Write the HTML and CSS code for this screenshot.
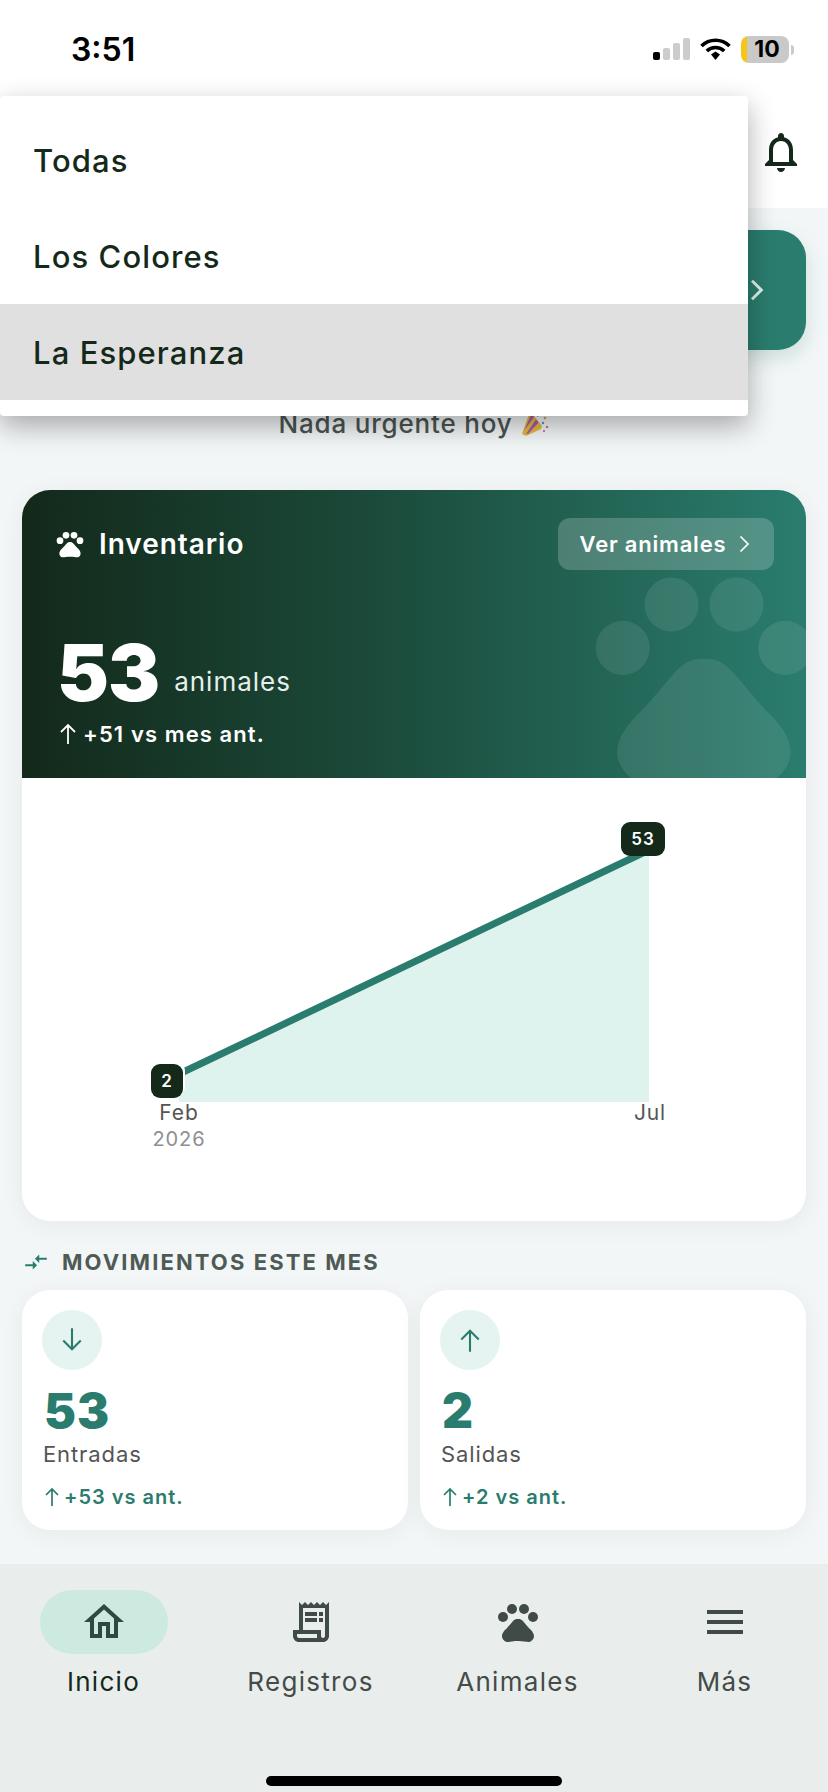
FILE: index.html
```html
<!DOCTYPE html>
<html lang="es">
<head>
    <meta charset="UTF-8">
    <meta name="viewport" content="width=device-width, initial-scale=1.0">
    <title>Inicio</title>
    <link rel="stylesheet" href="styles.css">
</head>
<body>

<div class="screen">

    <!-- Status bar + app bar -->
    <header class="top">
        <div class="status">
            <span class="time">3:51</span>
            <div class="status-icons">
                <svg class="signal" width="37" height="22" viewBox="0 0 37 22">
                    <rect x="0" y="14" width="7" height="8" rx="2" fill="#000"/>
                    <rect x="10" y="10" width="7" height="12" rx="2" fill="#ccc"/>
                    <rect x="20" y="5" width="7" height="17" rx="2" fill="#ccc"/>
                    <rect x="30" y="0" width="7" height="22" rx="2" fill="#ccc"/>
                </svg>
                <svg class="wifi" width="31" height="22" viewBox="0 0 31 22">
                    <path d="M1.5 8a20 20 0 0 1 28 0" fill="none" stroke="#000" stroke-width="3.6"/>
                    <path d="M6.8 13a12.5 12.5 0 0 1 17.4 0" fill="none" stroke="#000" stroke-width="3.6"/>
                    <path d="M11 16.5l4.5-3 4.5 3-4.5 5.5z" fill="#000"/>
                </svg>
                <div class="battery"><span>10</span></div>
                <div class="battery-cap"></div>
            </div>
        </div>
        <div class="appbar">
            <svg class="bell" width="48" height="48" viewBox="0 0 24 24"><path d="M12 22c1.1 0 2-.9 2-2h-4c0 1.1.9 2 2 2zm6-6v-5c0-3.07-1.63-5.64-4.5-6.32V4c0-.83-.67-1.5-1.5-1.5s-1.5.67-1.5 1.5v.68C7.64 5.36 6 7.92 6 11v5l-2 2v1h16v-1l-2-2zm-2 1H8v-6c0-2.48 1.51-4.5 4-4.5s4 2.02 4 4.5v6z"/></svg>
        </div>
    </header>

    <main class="content">
        <div class="banner">
            <svg width="32" height="32" viewBox="0 0 24 24" fill="none" stroke="#dff0ec" stroke-width="2.2"><path d="M9 5l7 7-7 7"/></svg>
        </div>

        <p class="nothing">Nada urgente hoy
            <svg class="party" width="28" height="30" viewBox="0 0 28 30">
                <path d="M9 3l12 15-1 3-15 7-4-2z" fill="#e8b93c"/>
                <path d="M10.5 6l2.5 3-8 11-2 3zM15 11.5l2.5 3-10 11-2.5.5z" fill="#a45cb5"/>
                <path d="M16 8l8-3" stroke="#4f93d8" stroke-width="1.6" fill="none"/>
                <circle cx="19" cy="3" r="1.2" fill="#d8574f"/>
                <circle cx="24" cy="10" r="1.3" fill="#d89a4f"/>
                <circle cx="22" cy="15" r="1.2" fill="#4f93d8"/>
                <circle cx="26" cy="19" r="1.2" fill="#d8774f"/>
                <circle cx="23" cy="23" r="1" fill="#a45cb5"/>
            </svg>
        </p>

        <section class="inv-card">
            <div class="inv-head">
                <svg class="ghost" width="260" height="260" viewBox="0 0 24 24">
                    <circle cx="4.5" cy="9.5" r="2.5"/><circle cx="9" cy="5.5" r="2.5"/><circle cx="15" cy="5.5" r="2.5"/><circle cx="19.5" cy="9.5" r="2.5"/>
                    <path d="M17.34 14.86c-.87-1.02-1.6-1.89-2.48-2.91-.46-.54-1.05-1.08-1.75-1.32-.11-.04-.22-.07-.33-.09-.25-.04-.52-.04-.78-.04s-.53 0-.79.05c-.11.02-.22.05-.33.09-.7.24-1.28.78-1.75 1.32-.87 1.02-1.6 1.89-2.48 2.91-1.31 1.31-2.92 2.76-2.62 4.79.29 1.02 1.02 2.03 2.33 2.32.73.15 3.06-.44 5.54-.44h.18c2.48 0 4.81.58 5.54.44 1.31-.29 2.04-1.3 2.33-2.32.31-2.04-1.3-3.49-2.61-4.8z"/>
                </svg>
                <div class="inv-top">
                    <div class="inv-title">
                        <svg width="32" height="32" viewBox="0 0 24 24" fill="#fff">
                            <circle cx="4.5" cy="9.5" r="2.5"/><circle cx="9" cy="5.5" r="2.5"/><circle cx="15" cy="5.5" r="2.5"/><circle cx="19.5" cy="9.5" r="2.5"/>
                            <path d="M17.34 14.86c-.87-1.02-1.6-1.89-2.48-2.91-.46-.54-1.05-1.08-1.75-1.32-.11-.04-.22-.07-.33-.09-.25-.04-.52-.04-.78-.04s-.53 0-.79.05c-.11.02-.22.05-.33.09-.7.24-1.28.78-1.75 1.32-.87 1.02-1.6 1.89-2.48 2.91-1.31 1.31-2.92 2.76-2.62 4.79.29 1.02 1.02 2.03 2.33 2.32.73.15 3.06-.44 5.54-.44h.18c2.48 0 4.81.58 5.54.44 1.31-.29 2.04-1.3 2.33-2.32.31-2.04-1.3-3.49-2.61-4.8z"/>
                        </svg>
                        <span>Inventario</span>
                    </div>
                    <div class="see-btn">Ver animales
                        <svg width="24" height="24" viewBox="0 0 24 24" fill="none" stroke="#fff" stroke-width="1.7"><path d="M8.5 4.5l7.5 7.5-7.5 7.5"/></svg>
                    </div>
                </div>
                <div class="inv-total"><span class="big">53</span><span class="unit">animales</span></div>
                <div class="inv-delta">
                    <svg width="20" height="24" viewBox="0 0 20 24" fill="none" stroke="#fff" stroke-width="1.8"><path d="M10 22V3M3 10l7-7 7 7"/></svg>
                    <span>+51 vs mes ant.</span>
                </div>
            </div>

            <!-- Chart -->
            <div class="chart">
                <svg class="plot" width="784" height="443" viewBox="0 0 784 443">
                    <polygon points="157,296 627,72 627,324 157,324" fill="#def3ee"/>
                    <line x1="157" y1="296" x2="627" y2="72" stroke="#2a7d6e" stroke-width="7"/>
                </svg>
                <div class="tag tag-end">53</div>
                <div class="tag tag-start">2</div>
                <div class="axis axis-start"><span>Feb</span><span class="year">2026</span></div>
                <div class="axis axis-end"><span>Jul</span></div>
            </div>
        </section>

        <h3 class="sec-title">
            <svg width="26" height="26" viewBox="0 0 24 24" fill="#2a7d6e"><path d="M9.01 14H2v2h7.01v3L13 15l-3.99-4v3zm5.98-1v-3H22V8h-7.01V5L11 9l3.99 4z"/></svg>
            MOVIMIENTOS ESTE MES
        </h3>

        <div class="moves">
            <div class="move-card">
                <div class="move-icon">
                    <svg width="28" height="28" viewBox="0 0 24 24" fill="none" stroke="#2a7d6e" stroke-width="1.8"><path d="M12 2v18M4.5 12.5l7.5 7.5 7.5-7.5"/></svg>
                </div>
                <div class="move-num">53</div>
                <div class="move-label">Entradas</div>
                <div class="move-delta">
                    <svg width="18" height="22" viewBox="0 0 18 22" fill="none" stroke="#2a7d6e" stroke-width="1.7"><path d="M9 20V3M3 9l6-6 6 6"/></svg>
                    <span>+53 vs ant.</span>
                </div>
            </div>
            <div class="move-card">
                <div class="move-icon">
                    <svg width="28" height="28" viewBox="0 0 24 24" fill="none" stroke="#2a7d6e" stroke-width="1.8"><path d="M12 22V4M4.5 11.5l7.5-7.5 7.5 7.5"/></svg>
                </div>
                <div class="move-num">2</div>
                <div class="move-label">Salidas</div>
                <div class="move-delta">
                    <svg width="18" height="22" viewBox="0 0 18 22" fill="none" stroke="#2a7d6e" stroke-width="1.7"><path d="M9 20V3M3 9l6-6 6 6"/></svg>
                    <span>+2 vs ant.</span>
                </div>
            </div>
        </div>
    </main>

    <!-- Bottom navigation -->
    <nav class="bottom-nav">
        <div class="nav-items">
            <div class="nav-item active">
                <div class="nav-icon">
                    <svg width="48" height="48" viewBox="0 0 24 24"><path d="M12 5.69l5 4.5V18h-2v-6H9v6H7v-7.81l5-4.5M12 3L2 12h3v8h6v-6h2v6h6v-8h3L12 3z"/></svg>
                </div>
                <span>Inicio</span>
            </div>
            <div class="nav-item">
                <div class="nav-icon">
                    <svg width="48" height="48" viewBox="0 0 24 24"><path d="M19.5 3.5L18 2l-1.5 1.5L15 2l-1.5 1.5L12 2l-1.5 1.5L9 2 7.5 3.5 6 2v14H3v3c0 1.66 1.34 3 3 3h12c1.66 0 3-1.34 3-3V2l-1.5 1.5zM15 20H6c-.55 0-1-.45-1-1v-1h10v2zm4-1c0 .55-.45 1-1 1s-1-.45-1-1v-3H8V5h11v14z"/><path d="M9 7h6v2H9zm7 0h2v2h-2zm-7 3h6v2H9zm7 0h2v2h-2z"/></svg>
                </div>
                <span>Registros</span>
            </div>
            <div class="nav-item">
                <div class="nav-icon">
                    <svg width="48" height="48" viewBox="0 0 24 24">
                        <circle cx="4.5" cy="9.5" r="2.5"/><circle cx="9" cy="5.5" r="2.5"/><circle cx="15" cy="5.5" r="2.5"/><circle cx="19.5" cy="9.5" r="2.5"/>
                        <path d="M17.34 14.86c-.87-1.02-1.6-1.89-2.48-2.91-.46-.54-1.05-1.08-1.75-1.32-.11-.04-.22-.07-.33-.09-.25-.04-.52-.04-.78-.04s-.53 0-.79.05c-.11.02-.22.05-.33.09-.7.24-1.28.78-1.75 1.32-.87 1.02-1.6 1.89-2.48 2.91-1.31 1.31-2.92 2.76-2.62 4.79.29 1.02 1.02 2.03 2.33 2.32.73.15 3.06-.44 5.54-.44h.18c2.48 0 4.81.58 5.54.44 1.31-.29 2.04-1.3 2.33-2.32.31-2.04-1.3-3.49-2.61-4.8z"/>
                    </svg>
                </div>
                <span>Animales</span>
            </div>
            <div class="nav-item">
                <div class="nav-icon">
                    <svg width="48" height="48" viewBox="0 0 24 24"><path d="M3 18h18v-2H3v2zm0-5h18v-2H3v2zm0-7v2h18V6H3z"/></svg>
                </div>
                <span>Más</span>
            </div>
        </div>
        <div class="home-bar"></div>
    </nav>

    <!-- Farm dropdown, open over the page -->
    <div class="menu">
        <div class="menu-item">Todas</div>
        <div class="menu-item">Los Colores</div>
        <div class="menu-item selected">La Esperanza</div>
    </div>

</div>

</body>
</html>
```

FILE: styles.css
```css
* {
    box-sizing: border-box;
}

body {
    margin: 0;
    font-family: Inter, "Liberation Sans", sans-serif;
    background-color: #f3f6f7;
    color: #14291a;
}

.screen {
    position: relative;
    width: 828px;
    height: 1792px;
    overflow: hidden;
    display: flex;
    flex-direction: column;
}

/* Top */
.top {
    height: 208px;
    background: white;
}

.status {
    height: 96px;
    padding: 30px 34px 0 71px;
    display: flex;
    justify-content: space-between;
}

.time {
    font-size: 32px;
    font-weight: 600;
    line-height: 40px;
    color: #000;
}

.status-icons {
    display: flex;
    align-items: flex-start;
    padding-top: 8px;
}

.signal {
    margin-right: 10px;
}

.wifi {
    margin-right: 10px;
}

.battery {
    width: 48px;
    height: 27px;
    margin-top: -2px;
    background: linear-gradient(90deg, #f5c518 0, #f5c518 6px, #c9c9c9 6px);
    border-radius: 8px;
    text-align: center;
    font-size: 23px;
    font-weight: 700;
    line-height: 27px;
    color: #000;
}

.battery span {
    padding-left: 4px;
}

.battery-cap {
    width: 3px;
    height: 10px;
    margin: 7px 0 0 2px;
    background: #ccc;
    border-radius: 0 3px 3px 0;
}

.appbar {
    display: flex;
    justify-content: flex-end;
    padding: 32px 23px 0 0;
}

.bell {
    fill: #14291a;
}

/* Content */
.content {
    flex: 1;
    padding: 22px 22px 0;
}

.banner {
    height: 120px;
    background: #2a7d6e;
    border-radius: 28px;
    display: flex;
    align-items: center;
    justify-content: flex-end;
    padding-right: 34px;
    box-shadow: 0 8px 20px rgba(42, 125, 110, 0.2);
}

.nothing {
    margin: 55px 0 49px;
    height: 36px;
    display: flex;
    align-items: center;
    justify-content: center;
    gap: 9px;
    font-size: 26px;
    font-weight: 500;
    letter-spacing: 0.8px;
    color: #4b5552;
}

.inv-card {
    height: 731px;
    background: white;
    border-radius: 28px;
    overflow: hidden;
    box-shadow: 0 4px 24px rgba(20, 41, 26, 0.06);
}

.inv-head {
    position: relative;
    height: 288px;
    padding: 28px 32px 0 32px;
    overflow: hidden;
    background: linear-gradient(90deg, #13291a 0%, #1b4a3a 45%, #2a7d6e 100%);
    color: white;
}

.ghost {
    position: absolute;
    left: 552px;
    top: 55px;
    fill: rgba(255, 255, 255, 0.09);
}

.inv-top {
    position: relative;
    display: flex;
    justify-content: space-between;
    align-items: center;
}

.inv-title {
    display: flex;
    align-items: center;
    gap: 13px;
    font-size: 28px;
    font-weight: 600;
    letter-spacing: 0.95px;
}

.see-btn {
    width: 216px;
    height: 52px;
    padding-left: 4px;
    display: flex;
    align-items: center;
    justify-content: center;
    gap: 6px;
    background: rgba(255, 255, 255, 0.2);
    border-radius: 12px;
    font-size: 22px;
    font-weight: 600;
    letter-spacing: 0.8px;
}

.inv-total {
    position: relative;
    display: flex;
    align-items: flex-end;
    gap: 15px;
    margin-top: 58px;
    padding-left: 3px;
}

.big {
    font-size: 78px;
    font-weight: 900;
    line-height: 90px;
    letter-spacing: -1px;
}

.unit {
    padding-bottom: 21px;
    font-size: 26px;
    letter-spacing: 1px;
    color: #e6efec;
}

.inv-delta {
    position: relative;
    display: flex;
    align-items: center;
    gap: 5px;
    margin-top: 3px;
    padding-left: 4px;
    font-size: 22px;
    font-weight: 600;
    letter-spacing: 1.1px;
}

/* Chart */
.chart {
    position: relative;
    height: 443px;
}

.plot {
    display: block;
}

.tag {
    position: absolute;
    background: #14291a;
    border-radius: 9px;
    color: white;
    font-size: 17px;
    font-weight: 600;
    letter-spacing: 1px;
    display: flex;
    align-items: center;
    justify-content: center;
}

.tag-end {
    left: 599px;
    top: 44px;
    width: 44px;
    height: 34px;
}

.tag-start {
    left: 129px;
    top: 286px;
    width: 32px;
    height: 34px;
    box-shadow: 2px -2px 0 white;
}

.axis {
    position: absolute;
    top: 322px;
    width: 120px;
    display: flex;
    flex-direction: column;
    align-items: center;
    font-size: 21px;
    line-height: 26px;
    letter-spacing: 0.9px;
    color: #555;
}

.axis-start {
    left: 97px;
}

.axis-end {
    left: 568px;
}

.year {
    font-size: 20px;
    color: #8d8f90;
}

/* Movimientos */
.sec-title {
    display: flex;
    align-items: center;
    gap: 13px;
    height: 26px;
    margin: 28px 0 15px;
    padding-left: 1px;
    font-size: 22px;
    font-weight: 700;
    letter-spacing: 2.1px;
    color: #4f5a55;
}

.moves {
    display: grid;
    grid-template-columns: 1fr 1fr;
    gap: 12px;
}

.move-card {
    height: 240px;
    padding: 20px;
    background: white;
    border-radius: 28px;
    box-shadow: 0 4px 24px rgba(20, 41, 26, 0.05);
}

.move-icon {
    width: 60px;
    height: 60px;
    border-radius: 50%;
    background: #e5f4f0;
    display: flex;
    align-items: center;
    justify-content: center;
}

.move-num {
    margin-top: 14px;
    padding-left: 2px;
    font-size: 48px;
    font-weight: 900;
    line-height: 54px;
    letter-spacing: 1px;
    color: #2a7d6e;
}

.move-label {
    margin-top: 2px;
    padding-left: 1px;
    font-size: 22px;
    line-height: 28px;
    letter-spacing: 0.9px;
    color: #555;
}

.move-delta {
    display: flex;
    align-items: center;
    gap: 3px;
    margin-top: 17px;
    padding-left: 1px;
    font-size: 20px;
    font-weight: 600;
    letter-spacing: 1px;
    color: #2a7d6e;
}

/* Bottom nav */
.bottom-nav {
    height: 228px;
    background: #e9eeed;
    display: flex;
    flex-direction: column;
}

.nav-items {
    display: grid;
    grid-template-columns: repeat(4, 1fr);
    padding-top: 26px;
}

.nav-item {
    display: flex;
    flex-direction: column;
    align-items: center;
    gap: 12px;
    font-size: 26px;
    line-height: 32px;
    letter-spacing: 1.3px;
    color: #444b48;
}

.nav-icon {
    width: 128px;
    height: 64px;
    border-radius: 32px;
    display: flex;
    align-items: center;
    justify-content: center;
    fill: #404a46;
}

.nav-item.active {
    color: #14291a;
}

.nav-item.active .nav-icon {
    background: #cdeae1;
    fill: #2d4a42;
}

.home-bar {
    width: 296px;
    height: 10px;
    margin: 78px auto 0;
    background: black;
    border-radius: 5px;
}

/* Dropdown */
.menu {
    position: absolute;
    left: 0;
    top: 96px;
    width: 748px;
    padding: 16px 0;
    background: white;
    border-radius: 4px;
    box-shadow: 0 10px 28px rgba(0, 0, 0, 0.32);
}

.menu-item {
    height: 96px;
    padding-left: 33px;
    display: flex;
    align-items: center;
    font-size: 31px;
    font-weight: 500;
    letter-spacing: 1.1px;
}

.menu-item.selected {
    background: #e0e0e0;
}
```
